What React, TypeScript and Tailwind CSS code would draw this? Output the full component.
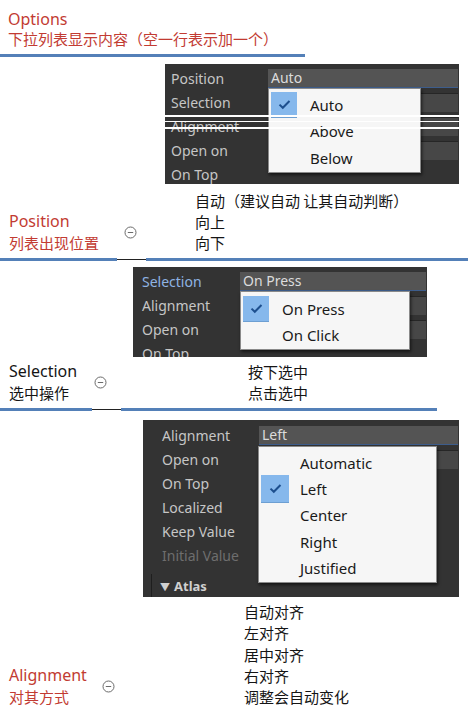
import React from "react";

const FONT = '"Noto Sans", "Open Sans", "Noto Sans CJK SC", sans-serif';
const CJK = '"Noto Sans CJK SC", "Noto Sans", sans-serif';

function CircleMinus() {
  return (
    <svg width="13" height="13" viewBox="0 0 13 13" className="shrink-0">
      <circle cx="6.5" cy="6.5" r="5.5" fill="none" stroke="#6b6b6b" strokeWidth="1" />
      <line x1="3.8" y1="6.5" x2="9.2" y2="6.5" stroke="#6b6b6b" strokeWidth="1" />
    </svg>
  );
}

function Check({ size }: { size: number }) {
  return (
    <div
      className="flex items-center justify-center bg-[#86b8ec] border-b border-[#6d9fd2]"
      style={{ width: size, height: size }}
    >
      <svg width="13" height="11" viewBox="0 0 13 11">
        <path d="M1.5 5.6 L4.8 8.8 L11.5 2" fill="none" stroke="#1d4f8e" strokeWidth="2" />
      </svg>
    </div>
  );
}

function Divider({ a, b, c }: { a: number; b: number; c: number }) {
  return (
    <div className="flex items-center h-[3px]">
      <div className="h-[3px] bg-[#5480b8]" style={{ width: a }} />
      <div className="h-px bg-[#222]" style={{ width: b }} />
      <div className="h-[3px] bg-[#5480b8]" style={{ width: c }} />
    </div>
  );
}

function Popup({
  items,
  checked,
  left,
  top,
  width,
  step,
  firstCenter,
  boxSize,
}: {
  items: string[];
  checked: number;
  left: number;
  top: number;
  width: number;
  step: number;
  firstCenter: number;
  boxSize: number;
}) {
  const height = firstCenter + step * (items.length - 1) + 16;
  return (
    <div
      className="absolute bg-[#f6f6f6] border border-[#8a8a8a] shadow-[1px_2px_3px_rgba(0,0,0,0.6)]"
      style={{ left, top, width, height }}
    >
      {items.map((it, i) => (
        <div
          key={it}
          className="absolute left-0 right-0 flex items-center"
          style={{ top: firstCenter + step * i - step / 2, height: step }}
        >
          <div className="w-[41px] pl-[2px] flex items-center">
            {i === checked ? <Check size={boxSize} /> : null}
          </div>
          <span className="text-[15px] text-[#1a1a1a]" style={{ fontFamily: FONT }}>
            {it}
          </span>
        </div>
      ))}
    </div>
  );
}

type Row = { label: string; field?: string; fieldTone?: "top" | "plain"; dim?: boolean; hl?: boolean };

function Panel({
  width,
  height,
  labelW,
  padL,
  padT,
  rows,
  children,
  extra,
}: {
  width: number;
  height: number;
  labelW: number;
  padL: number;
  padT: number;
  rows: Row[];
  children?: React.ReactNode;
  extra?: React.ReactNode;
}) {
  return (
    <div
      className="relative overflow-hidden bg-[#333333]"
      style={{ width, height, paddingTop: padT, fontFamily: FONT }}
    >
      {rows.map((r, i) => (
        <div key={i} className="flex h-[24px] items-center">
          <div
            className={
              "text-[14px] " + (r.dim ? "text-[#6e6e6e]" : r.hl ? "text-[#8fb3e3]" : "text-[#c6c6c6]")
            }
            style={{ width: labelW, paddingLeft: padL }}
          >
            {r.label}
          </div>
          {r.fieldTone ? (
            <div
              className={
                "flex-1 h-[19px] mr-[1px] flex items-center pl-[3px] text-[14px] text-[#dcdcdc] " +
                (r.fieldTone === "top"
                  ? "bg-[#545454] border-b border-[#3d5d8c]"
                  : "bg-[#474747] border-t border-[#262626]")
              }
            >
              {r.field}
            </div>
          ) : null}
        </div>
      ))}
      {extra}
      {children}
    </div>
  );
}

export default function App() {
  return (
    <div className="w-[475px] h-[711px] bg-white overflow-hidden relative" style={{ fontFamily: CJK }}>
      {/* Header */}
      <div className="pt-[9px] pl-[8px] text-[15px] leading-[20px] text-[#c23b32]">
        <div className="text-[16px]" style={{ fontFamily: FONT }}>Options</div>
        <div>下拉列表显示内容（空一行表示加一个）</div>
      </div>
      <div className="mt-[5px] h-[3px] w-[305px] bg-[#5480b8]" />

      {/* Panel 1 */}
      <div className="mt-[7px] ml-[165px]">
        <Panel
          width={294}
          height={120}
          labelW={103}
          padL={6}
          padT={2}
          rows={[
            { label: "Position", field: "Auto", fieldTone: "top" },
            { label: "Selection", fieldTone: "plain" },
            { label: "Alignment", fieldTone: "plain" },
            { label: "Open on", fieldTone: "plain" },
            { label: "On Top" },
          ]}
        >
          <Popup
            items={["Auto", "Above", "Below"]}
            checked={0}
            left={103}
            top={24}
            width={153}
            step={26.5}
            firstCenter={16}
            boxSize={26}
          />
          <div className="absolute left-0 right-0 top-[51px] h-[2px] bg-white" />
          <div className="absolute left-0 right-0 top-[57px] h-px bg-white" />
          <div className="absolute left-0 right-0 top-[63px] h-[2px] bg-white" />
        </Panel>
      </div>

      {/* Position text */}
      <div className="mt-[6px] flex items-end text-[15px] leading-[21px] text-[#151515]">
        <div className="flex items-center pl-[9px]">
          <div className="w-[115px] text-[#c23b32]">
            <div className="text-[16px]" style={{ fontFamily: FONT }}>Position</div>
            <div>列表出现位置</div>
          </div>
          <CircleMinus />
        </div>
        <div className="ml-[58px]">
          <div>自动（建议自动 让其自动判断）</div>
          <div>向上</div>
          <div>向下</div>
        </div>
      </div>
      <div className="mt-[5px]">
        <Divider a={117} b={29} c={322} />
      </div>

      {/* Panel 2 */}
      <div className="mt-[6px] ml-[133px]">
        <Panel
          width={294}
          height={90}
          labelW={107}
          padL={9}
          padT={2}
          rows={[
            { label: "Selection", field: "On Press", fieldTone: "top", hl: true },
            { label: "Alignment", fieldTone: "plain" },
            { label: "Open on", fieldTone: "plain" },
            { label: "On Top" },
          ]}
        >
          <Popup
            items={["On Press", "On Click"]}
            checked={0}
            left={107}
            top={24}
            width={170}
            step={26}
            firstCenter={17}
            boxSize={26}
          />
        </Panel>
      </div>

      {/* Selection text */}
      <div className="mt-[4px] flex items-end text-[15px] leading-[21px] text-[#151515]">
        <div className="flex items-center pl-[9px]">
          <div className="w-[85px]">
            <div className="text-[16px]" style={{ fontFamily: FONT }}>Selection</div>
            <div>选中操作</div>
          </div>
          <CircleMinus />
        </div>
        <div className="ml-[141px]">
          <div>按下选中</div>
          <div>点击选中</div>
        </div>
      </div>
      <div className="mt-[5px]">
        <Divider a={92} b={29} c={316} />
      </div>

      {/* Panel 3 */}
      <div className="mt-[9px] ml-[143px]">
        <Panel
          width={316}
          height={177}
          labelW={116}
          padL={19}
          padT={3}
          rows={[
            { label: "Alignment", field: "Left", fieldTone: "top" },
            { label: "Open on", fieldTone: "plain" },
            { label: "On Top" },
            { label: "Localized" },
            { label: "Keep Value" },
            { label: "Initial Value", dim: true },
          ]}
          extra={
            <div className="mt-[7px] ml-[8px] flex h-[26px] items-center border-l border-[#1e1e1e] pl-[8px] text-[13px] font-bold text-[#d0d0d0]">
              <span className="text-[10px] mr-[4px]">▼</span>Atlas
            </div>
          }
        >
          <Popup
            items={["Automatic", "Left", "Center", "Right", "Justified"]}
            checked={1}
            left={115}
            top={26}
            width={179}
            step={26.3}
            firstCenter={16}
            boxSize={28}
          />
        </Panel>
      </div>

      {/* Alignment text */}
      <div className="mt-[4px] flex items-end text-[15px] leading-[21.3px] text-[#151515]">
        <div className="flex items-center pl-[9px]">
          <div className="w-[93px] text-[#c23b32]">
            <div className="text-[16px]" style={{ fontFamily: FONT }}>Alignment</div>
            <div>对其方式</div>
          </div>
          <CircleMinus />
        </div>
        <div className="ml-[129px]">
          <div>自动对齐</div>
          <div>左对齐</div>
          <div>居中对齐</div>
          <div>右对齐</div>
          <div>调整会自动变化</div>
        </div>
      </div>
    </div>
  );
}
